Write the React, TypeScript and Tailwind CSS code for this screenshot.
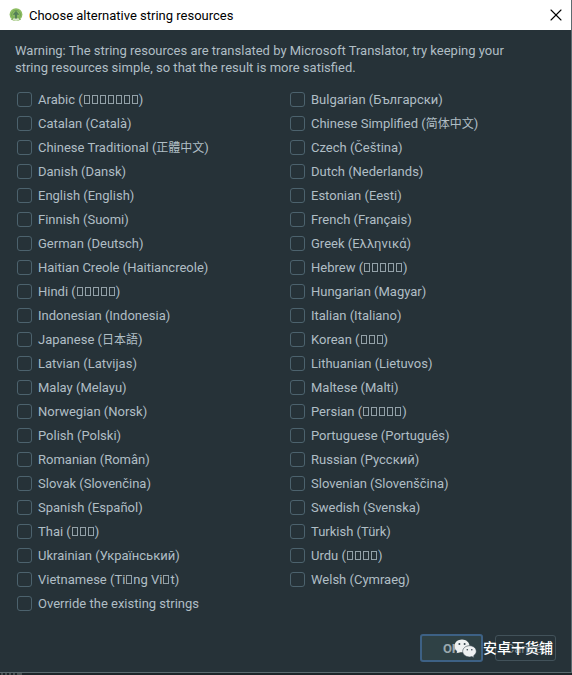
import React from 'react';
import { X } from 'lucide-react';

// ▯ stands for a glyph the dialog font has no shape for
const languages = [
  'Arabic (▯▯▯▯▯▯▯)',
  'Bulgarian (Български)',
  'Catalan (Català)',
  'Chinese Simplified (简体中文)',
  'Chinese Traditional (正體中文)',
  'Czech (Čeština)',
  'Danish (Dansk)',
  'Dutch (Nederlands)',
  'English (English)',
  'Estonian (Eesti)',
  'Finnish (Suomi)',
  'French (Français)',
  'German (Deutsch)',
  'Greek (Ελληνικά)',
  'Haitian Creole (Haitiancreole)',
  'Hebrew (▯▯▯▯▯)',
  'Hindi (▯▯▯▯▯)',
  'Hungarian (Magyar)',
  'Indonesian (Indonesia)',
  'Italian (Italiano)',
  'Japanese (日本語)',
  'Korean (▯▯▯)',
  'Latvian (Latvijas)',
  'Lithuanian (Lietuvos)',
  'Malay (Melayu)',
  'Maltese (Malti)',
  'Norwegian (Norsk)',
  'Persian (▯▯▯▯▯)',
  'Polish (Polski)',
  'Portuguese (Português)',
  'Romanian (Român)',
  'Russian (Русский)',
  'Slovak (Slovenčina)',
  'Slovenian (Slovenščina)',
  'Spanish (Español)',
  'Swedish (Svenska)',
  'Thai (▯▯▯)',
  'Turkish (Türk)',
  'Ukrainian (Український)',
  'Urdu (▯▯▯▯)',
  'Vietnamese (Ti▯ng Vi▯t)',
  'Welsh (Cymraeg)',
];

const CheckItem: React.FC<{ label: string }> = ({ label }) => {
  return (
    <label className="flex h-6 items-center gap-1.5 pb-px whitespace-nowrap">
      <input
        type="checkbox"
        className="size-[15px] shrink-0 appearance-none rounded-[3px] border border-[#4c626d] checked:bg-[#4c626d]"
      />
      <span>
        {label.split(/(▯|[\u4e00-\u9fff]+)/).map((part, i) => {
          if (part === '▯') {
            return (
              <span key={i} className="mx-px inline-block h-[9px] w-1.5 border border-[#93a1a8]" />
            );
          }
          if (/[\u4e00-\u9fff]/.test(part)) {
            return (
              <span key={i} className="text-xs leading-none">
                {part}
              </span>
            );
          }
          return part;
        })}
      </span>
    </label>
  );
};

const StudioIcon: React.FC = () => {
  return (
    <svg viewBox="0 0 14 14" className="size-3.5" aria-hidden="true">
      <circle cx="7" cy="6.6" r="6.4" fill="#8dbd62" />
      <path d="M1.8 10.2h10.4A6.4 6.4 0 0 1 7 13a6.4 6.4 0 0 1-5.2-2.8z" fill="#d5e5c6" />
      <path d="M3 8.6a4.4 4.4 0 1 1 8 0" fill="none" stroke="#6f9f55" strokeWidth="1" />
      <path d="M7 2.8 3.6 6.8h2.3v3.8h2.2V6.800h2.300z" fill="#557f58" />
      <path d="M4.400 8.600 2.800 12M9.600 8.600l1.600 3.400" stroke="#7fb05a" strokeWidth="1.400" />
    </svg>
  );
};

const WeChatIcon: React.FC = () => {
  return (
    <svg viewBox="0 0 23 19" className="h-[19px] w-[23px]" aria-hidden="true">
      <path
        d="M8 .5C3.800.5.5 3.300.5 6.900c0 2 1.100 3.800 2.800 5L2.600 14.300l2.700-1.400c.9.300 1.800.4 2.700.4 4.200 0 7.500-2.900 7.500-6.400S12.200.5 8 .5z"
        fill="#eef1f2"
      />
      <circle cx="5.4" cy="4.9" r="1" fill="#37474f" />
      <circle cx="10.6" cy="4.9" r="1" fill="#37474f" />
      <path
        d="M15.600 6.700c-3.900 0-6.900 2.500-6.900 5.600s3 5.700 6.900 5.700c.8 0 1.600-.1 2.300-.4l2.200 1.200-.5-2c1.600-1.100 2.700-2.700 2.700-4.500 0-3.100-2.900-5.600-6.700-5.600z"
        fill="#eef1f2"
        stroke="#37474f"
        strokeWidth="0.6"
      />
      <circle cx="13.3" cy="10.8" r="0.8" fill="#37474f" />
      <circle cx="17.8" cy="10.8" r="0.8" fill="#37474f" />
    </svg>
  );
};

export default function App() {
  return (
    <div className="flex min-h-screen flex-col bg-[#1d2529] font-['Roboto','Noto_Sans_CJK_SC',sans-serif] text-[13px] leading-[17px] text-[#b0bec5]">
      <div className="flex grow flex-col border-r border-b border-[#5c6b70] bg-[#263238]">
        <header className="flex h-[30px] items-center gap-1.5 bg-white pr-[5px] pl-[9px] text-black">
          <StudioIcon />
          <h1 className="grow">Choose alternative string resources</h1>
          <button aria-label="Close">
            <X className="size-5" strokeWidth={1.3} />
          </button>
        </header>

        <main className="grow pt-3 pr-2 pl-[15px]">
          <p className="max-w-[510px]">
            Warning: The string resources are translated by Microsoft Translator, try keeping your
            string resources simple, so that the result is more satisfied.
          </p>
          <div className="mt-3 grid grid-cols-2 pl-0.5">
            {languages.map((language) => (
              <CheckItem key={language} label={language} />
            ))}
            <CheckItem label="Override the existing strings" />
          </div>
        </main>

        <footer className="relative flex items-center justify-end gap-3 pr-[15px] pb-[10px]">
          <button className="h-7 w-[63px] rounded-[3px] border-2 border-[#3d6185] bg-[#2f4145] font-bold text-[#9aa8ae]">
            OK
          </button>
          <button className="h-[26px] w-[61px] rounded-[3px] border border-[#42525a] text-[#76858c]">
            Cancel
          </button>
          <div className="pointer-events-none absolute right-[18px] bottom-[14px] flex items-center gap-1.5 text-sm font-medium text-white">
            <WeChatIcon />
            <span>安卓干货铺</span>
          </div>
        </footer>
      </div>
      {/* sliver of the editor behind the dialog */}
      <svg viewBox="0 0 24 2" className="h-0.5 w-6" aria-hidden="true">
        <path d="M2 0v2M6 0v2M10 0v2M14 0v2M17 1h5" stroke="#76807f" strokeWidth="1" />
      </svg>
    </div>
  );
}
